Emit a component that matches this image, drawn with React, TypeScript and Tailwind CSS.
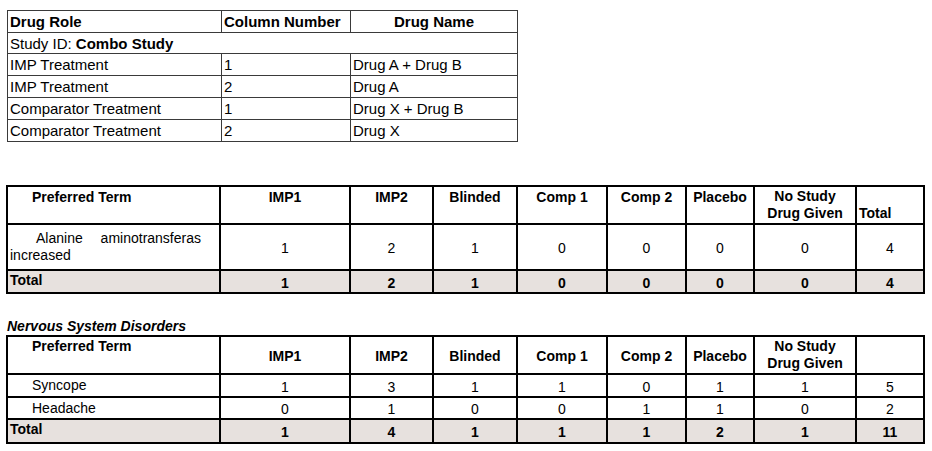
// Drug role mapping + adverse event count tables (spreadsheet export look)

const drugRoles = [
    { role: 'IMP Treatment', col: '1', name: 'Drug A + Drug B' },
    { role: 'IMP Treatment', col: '2', name: 'Drug A' },
    { role: 'Comparator Treatment', col: '1', name: 'Drug X + Drug B' },
    { role: 'Comparator Treatment', col: '2', name: 'Drug X' },
];

// column widths for the two count tables (px)
const colWidths = [213, 130, 83, 84, 90, 79, 68, 102, 68];
const armHeaders = ['IMP1', 'IMP2', 'Blinded', 'Comp 1', 'Comp 2', 'Placebo'];

const cell = 'border-2 border-black';

function CountColGroup() {
    return (
        <colgroup>
            {colWidths.map((w, i) => (
                <col key={i} style={{ width: w }} />
            ))}
        </colgroup>
    );
}

function CountRow({ values, label, indent, height, total }: { values: number[]; label: React.ReactNode; indent?: boolean; height: string; total?: boolean }) {
    return (
        <tr className={`${height} ${total ? 'bg-[#e7e1de] font-bold' : ''}`}>
            <td className={`${cell} px-[2px] leading-[17px] ${indent ? 'pl-[24px]' : ''} ${total ? 'pb-[3px]' : ''}`}>{label}</td>
            {values.map((v, i) => (
                <td key={i} className={`${cell} text-center leading-none pt-[2px]`}>
                    {v}
                </td>
            ))}
        </tr>
    );
}

export default function App() {
    return (
        <div className="w-[932px] h-[451px] bg-white overflow-hidden font-['Liberation_Sans',Arial,sans-serif] text-black">
            {/* Drug role table */}
            <div className="pt-[10px] pl-[7px]">
                <table className="table-fixed border-collapse text-[15px] leading-none">
                    <colgroup>
                        <col style={{ width: 214 }} />
                        <col style={{ width: 129 }} />
                        <col style={{ width: 167 }} />
                    </colgroup>
                    <tbody>
                        <tr className="h-[22px] font-bold">
                            <td className="border border-[#3a3a3a] px-[2px]">Drug Role</td>
                            <td className="border border-[#3a3a3a] px-[2px]">Column Number</td>
                            <td className="border border-[#3a3a3a] px-[2px] text-center">Drug Name</td>
                        </tr>
                        <tr className="h-[21px]">
                            <td colSpan={3} className="border border-[#3a3a3a] px-[2px]">
                                Study ID: <span className="font-bold">Combo Study</span>
                            </td>
                        </tr>
                        {drugRoles.map((d, i) => (
                            <tr key={i} className="h-[22px]">
                                <td className="border border-[#3a3a3a] px-[2px]">{d.role}</td>
                                <td className="border border-[#3a3a3a] px-[2px]">{d.col}</td>
                                <td className="border border-[#3a3a3a] px-[2px]">{d.name}</td>
                            </tr>
                        ))}
                    </tbody>
                </table>
            </div>

            {/* Unnamed SOC table */}
            <div className="pt-[43px] pl-[6px]">
                <table className="table-fixed border-collapse text-[14px]">
                    <CountColGroup />
                    <tbody>
                        <tr className="h-[38px] font-bold">
                            <td className={`${cell} align-top pl-[24px] pt-[2px] leading-[17px]`}>Preferred Term</td>
                            {armHeaders.map((h) => (
                                <td key={h} className={`${cell} align-top text-center pt-[2px] leading-[17px]`}>
                                    {h}
                                </td>
                            ))}
                            <td className={`${cell} align-top text-center pt-[1px] leading-[17px]`}>
                                No Study
                                <br />
                                Drug Given
                            </td>
                            <td className={`${cell} align-bottom pl-[2px] pb-[1px] leading-[17px]`}>Total</td>
                        </tr>
                        <CountRow
                            height="h-[46px]"
                            label={
                                <div className="text-justify [text-align-last:left] indent-[26px] pr-[16px]">
                                    Alanine aminotransferas increased
                                </div>
                            }
                            values={[1, 2, 1, 0, 0, 0, 0, 4]}
                        />
                        <CountRow height="h-[23px]" total label="Total" values={[1, 2, 1, 0, 0, 0, 0, 4]} />
                    </tbody>
                </table>
            </div>

            {/* Nervous System Disorders */}
            <div className="pt-[25px] pl-[7px] text-[14px] font-bold italic leading-none">Nervous System Disorders</div>
            <div className="pt-[2px] pl-[6px]">
                <table className="table-fixed border-collapse text-[14px]">
                    <CountColGroup />
                    <tbody>
                        <tr className="h-[38px] font-bold">
                            <td className={`${cell} align-top pl-[24px] pt-[1px] leading-[17px]`}>Preferred Term</td>
                            {armHeaders.map((h) => (
                                <td key={h} className={`${cell} text-center pt-[2px] leading-[17px]`}>
                                    {h}
                                </td>
                            ))}
                            <td className={`${cell} text-center leading-[17px]`}>
                                No Study
                                <br />
                                Drug Given
                            </td>
                            <td className={cell}></td>
                        </tr>
                        <CountRow height="h-[23px]" indent label="Syncope" values={[1, 3, 1, 1, 0, 1, 1, 5]} />
                        <CountRow height="h-[22px]" indent label="Headache" values={[0, 1, 0, 0, 1, 1, 0, 2]} />
                        <CountRow height="h-[24px]" total label="Total" values={[1, 4, 1, 1, 1, 2, 1, 11]} />
                    </tbody>
                </table>
            </div>
        </div>
    );
}
